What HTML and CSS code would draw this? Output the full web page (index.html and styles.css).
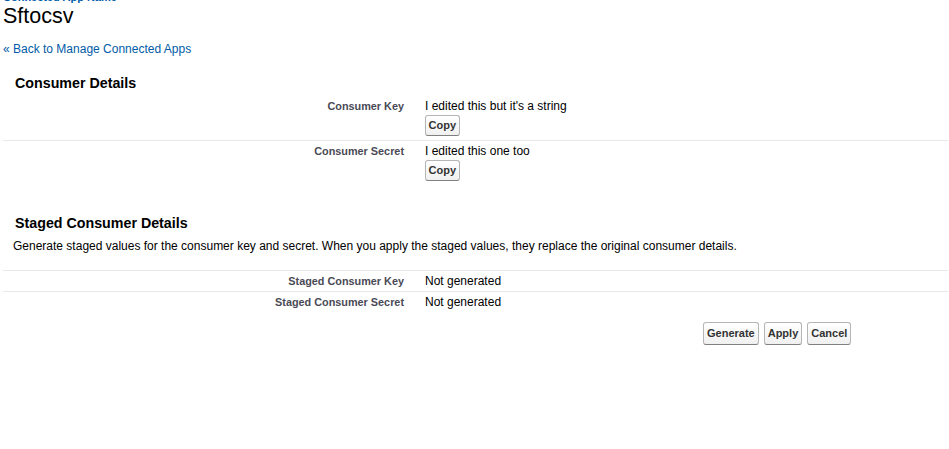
FILE: index.html
```html
<!DOCTYPE html>
<html>
<head>
<meta charset="utf-8">
<link rel="stylesheet" href="styles.css">
</head>
<body>
<div class="page">
  <div class="ptitle">
    <div class="ptype">Connected App Name</div>
    <h1 class="pname">Sftocsv</h1>
  </div>
  <div class="backlink"><a href="#">« Back to Manage Connected Apps</a></div>

  <section class="block">
    <h2 class="btitle">Consumer Details</h2>
    <div class="dtable">
      <div class="drow sep">
        <div class="lbl">Consumer Key</div>
        <div class="val">
          <div>I edited this but it's a string</div>
          <button class="btn">Copy</button>
        </div>
      </div>
      <div class="drow">
        <div class="lbl">Consumer Secret</div>
        <div class="val">
          <div>I edited this one too</div>
          <button class="btn">Copy</button>
        </div>
      </div>
    </div>
  </section>

  <section class="block staged">
    <h2 class="btitle">Staged Consumer Details</h2>
    <p class="desc">Generate staged values for the consumer key and secret. When you apply the staged values, they replace the original consumer details.</p>
    <div class="dtable topline">
      <div class="drow sep small">
        <div class="lbl">Staged Consumer Key</div>
        <div class="val">Not generated</div>
      </div>
      <div class="drow small">
        <div class="lbl">Staged Consumer Secret</div>
        <div class="val">Not generated</div>
      </div>
    </div>
    <div class="actions">
      <button class="btn big">Generate</button>
      <button class="btn big">Apply</button>
      <button class="btn big">Cancel</button>
    </div>
  </section>
</div>
</body>
</html>
```
FILE: styles.css
```css
html, body {
  margin: 0;
  padding: 0;
  background: #fff;
}
body {
  font-family: "Liberation Sans", Arial, sans-serif;
  font-size: 12px;
  color: #000;
}
.page {
  padding: 0 1px 0 3px;
  margin-top: -9px;
}
.ptype {
  font-size: 11px;
  font-weight: bold;
  color: #015ba7;
  line-height: 12px;
}
.pname {
  margin: 0;
  font-size: 21.5px;
  font-weight: normal;
  line-height: 26px;
  color: #000;
}
.backlink {
  margin-top: 13px;
  line-height: 14px;
}
.backlink a {
  color: #015ba7;
  text-decoration: none;
}
.block {
  margin-top: 18px;
}
.btitle {
  margin: 0 0 0 12px;
  font-size: 14.25px;
  font-weight: bold;
  line-height: 18px;
  color: #000;
}
.dtable {
  margin-top: 4px;
}
.topline {
  border-top: 1px solid #e8e8e8;
  margin-top: 17px;
}
.drow {
  display: grid;
  grid-template-columns: 401px 1fr;
  column-gap: 20px;
  padding: 3px 0 4px;
}
.drow.sep {
  border-bottom: 1px solid #e8e8e8;
}
.drow.small {
  padding: 3px 0 3px;
}
.lbl {
  text-align: right;
  font-size: 10.85px;
  font-weight: bold;
  color: #4a4a56;
  line-height: 14px;
}
.val {
  line-height: 14px;
  padding-left: 1px;
}
.btn {
  font-family: "Liberation Sans", Arial, sans-serif;
  font-size: 11px;
  font-weight: bold;
  color: #333;
  background: linear-gradient(#ffffff, #f0f0f0);
  border: 1px solid #b5b5b5;
  border-bottom-color: #7f7f7f;
  border-radius: 3px;
  padding: 3px 2.5px;
  line-height: 13px;
  margin: 0;
  cursor: pointer;
  display: block;
}
.val .btn {
  margin-top: 2px;
}
.staged {
  margin-top: 29px;
}
.desc {
  margin: 7px 0 0 10px;
  line-height: 14px;
}
.actions {
  display: flex;
  gap: 5px;
  padding-left: 700px;
  margin-top: 10px;
}
.btn.big {
  padding: 4px 3px;
}
```
